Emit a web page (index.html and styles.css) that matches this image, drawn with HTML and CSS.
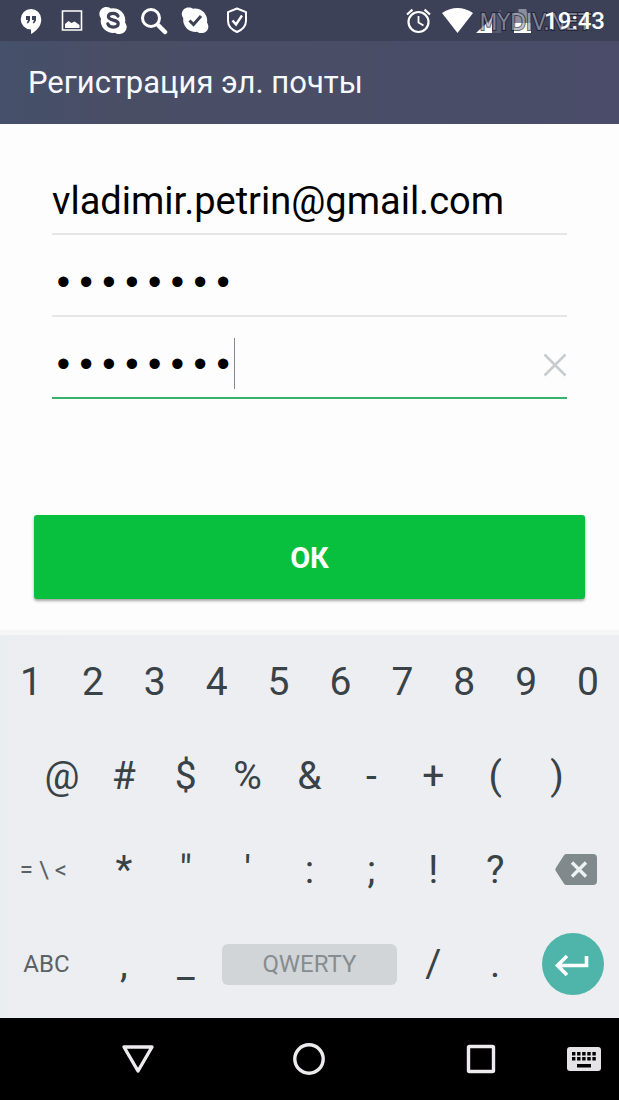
FILE: index.html
```html
<!DOCTYPE html>
<html lang="ru">
<head>
<meta charset="utf-8">
<meta name="viewport" content="width=device-width, initial-scale=1">
<title>Регистрация эл. почты</title>
<link rel="stylesheet" href="styles.css">
</head>
<body>
<div class="screen">
  <div class="status">
    <div class="status-group">
      <svg class="icon" viewBox="0 0 28 28"><path fill="#fff" d="M14 2a10.300 10.300 0 0 0 0 20.600v4.400c5-2.500 10.300-7.500 10.300-14.700A10.300 10.300 0 0 0 14 2z"/><path fill="#3d4158" d="M9 9h4v4.500l-1.800 2.700H9.700L11 13H9zM15 9h4v4.500l-1.800 2.700h-1.500L17 13h-2z"/></svg>
      <svg class="icon" viewBox="0 0 28 28"><path fill="none" stroke="#fff" stroke-width="1.600" d="M4.500 4h19v19h-19z"/><path fill="#fff" d="M7 21v-4l3.500-3 3 2 3-1.500 5 3.500v3z"/></svg>
      <svg class="icon" viewBox="0 0 28 28"><path fill="#fff" d="M7.500 0c2 0 3.500.8 4.500 1.400A12 12 0 0 1 26 15.600c1.200 1.800 2 3.400 1.600 5.500-.7 3.800-4 6.200-7.500 5.900-1.800 0-3-.6-4.200-1.300A12 12 0 0 1 2 11.400C1 10 .2 8.200.4 6.300.8 2.700 3.800 0 7.500 0z"/><path fill="none" stroke="#3d4158" stroke-width="3.200" stroke-linecap="round" d="M19 9c-1-2.200-3-2.700-5-2.700-2.600 0-4.600 1.200-4.600 3.300 0 4.800 9.800 2.300 9.800 7 0 2.300-2.200 3.500-5 3.500-2.600 0-4.600-1-5.400-3.300"/></svg>
      <svg class="icon" viewBox="0 0 28 28"><circle cx="11" cy="11" r="8.500" fill="none" stroke="#fff" stroke-width="3"/><path stroke="#fff" stroke-width="4.500" stroke-linecap="round" d="M18.500 18.500l6.500 6.500"/></svg>
      <svg class="icon" viewBox="0 0 28 28"><path fill="#fff" d="M7.500.5c2 0 3.500.6 4.500 1.200A12 12 0 0 1 26 15.600c1 1.800 1.600 3.400 1.200 5.300-.7 3.300-3.800 5.400-7.200 5.200-1.600 0-2.800-.6-4-1.300A12 12 0 0 1 2.300 11.400C1.300 10 .6 8.200.8 6.500c.4-3.400 3.200-6 6.700-6z"/><path fill="none" stroke="#3d4158" stroke-width="3" d="M8.500 13.500l4 4 7.500-8.500"/></svg>
      <svg class="icon" viewBox="0 0 28 28"><path fill="none" stroke="#fff" stroke-width="2" stroke-linejoin="round" d="M15 1.500l9 3.700v8.500c0 5.500-3.800 9-9 11.300-5.200-2.300-9-5.800-9-11.300V5.200z"/><path fill="none" stroke="#fff" stroke-width="2.400" d="M10.500 13.500l3.500 4 6-9"/></svg>
    </div>
    <div class="status-group status-right">
      <svg class="icon" viewBox="0 0 28 28"><g fill="none" stroke="#fff" stroke-width="2.200"><circle cx="15.500" cy="15" r="10"/><path stroke-width="1.800" d="M15.500 9v6.500l5 3"/><path d="M4 7.500l5.500-4.800M27 7.500l-5.500-4.800"/></g></svg>
      <svg class="icon-signal" viewBox="0 0 60 28"><path fill="#fff" d="M15.500 26L0 6Q15.500-4 31 6z"/><path fill="#fff" d="M34 26L50 11v15z"/><path fill="#777b8a" d="M50 11l9-9v24h-9z" opacity=".45"/></svg>
      <svg class="icon-battery" viewBox="0 0 20 28"><path fill="#8b8e9d" d="M1 5h4.500V2h8v3H18v13H1z"/><path fill="#fff" d="M1 16h17v10H1z"/></svg>
      <span class="watermark">MYDIV.NET</span>
      <time class="clock">19:43</time>
    </div>
  </div>

  <header class="toolbar"><h1 class="title">Регистрация эл. почты</h1></header>

  <form class="form">
    <div class="fields">
      <div class="field"><input class="input" type="email" value="vladimir.petrin@gmail.com" aria-label="Эл. почта"></div>
      <div class="field"><input class="input secret" type="password" value="12345678" aria-label="Пароль"></div>
      <div class="field active">
        <input class="input secret" type="password" value="12345678" aria-label="Повторите пароль">
        <span class="caret"></span>
        <button class="clear" type="button" aria-label="Очистить"><svg class="clear-icon" viewBox="0 0 24 24"><path stroke="#c9cccf" stroke-width="2.500" d="M1.500 1.500l21 21M22.500 1.500l-21 21"/></svg></button>
      </div>
    </div>
    <button class="submit" type="button">ОК</button>
  </form>

  <div class="keyboard">
    <div class="keys">
      <button class="key">1</button><button class="key">2</button><button class="key">3</button><button class="key">4</button><button class="key">5</button><button class="key">6</button><button class="key">7</button><button class="key">8</button><button class="key">9</button><button class="key">0</button>
    </div>
    <div class="keys">
      <button class="key first">@</button><button class="key">#</button><button class="key">$</button><button class="key">%</button><button class="key">&amp;</button><button class="key">-</button><button class="key">+</button><button class="key">(</button><button class="key">)</button>
    </div>
    <div class="keys">
      <button class="key wide symbols">= \ &lt;</button><button class="key">*</button><button class="key">"</button><button class="key">'</button><button class="key">:</button><button class="key">;</button><button class="key">!</button><button class="key">?</button>
      <button class="key wide" aria-label="Удалить"><svg class="delete-icon" viewBox="0 0 42 32"><path fill="#80898c" d="M11.500 0H38a4 4 0 0 1 4 4v23a4 4 0 0 1-4 4H11.500a3 3 0 0 1-2.500-1.300L.8 17a3 3 0 0 1 0-3L9 1.300A3 3 0 0 1 11.500 0z"/><path stroke="#eef1f3" stroke-width="3.400" d="M17 8.500l14 14M31 8.500l-14 14"/></svg></button>
    </div>
    <div class="keys">
      <button class="key wide letters">ABC</button><button class="key">,</button><button class="key">_</button>
      <button class="key space"><span class="space-label">QWERTY</span></button>
      <button class="key">/</button><button class="key">.</button>
      <button class="key wide" aria-label="Ввод"><svg class="enter-icon" viewBox="0 0 62 62"><circle cx="31" cy="31" r="31" fill="#4fb5aa"/><path fill="none" stroke="#fff" stroke-width="3.600" d="M44.500 23v9.500H15.500M25 23L15.500 32.500l9.500 9.500"/></svg></button>
    </div>
  </div>

  <nav class="nav">
    <button class="nav-button back" aria-label="Назад"><svg class="nav-icon" viewBox="0 0 34 34"><path fill="none" stroke="#eeebee" stroke-width="3.400" stroke-linejoin="round" d="M3 5h28L17 29z"/></svg></button>
    <button class="nav-button" aria-label="Домой"><svg class="nav-icon" viewBox="0 0 34 34"><circle cx="17" cy="17" r="14.200" fill="none" stroke="#eeebee" stroke-width="3.400"/></svg></button>
    <button class="nav-button" aria-label="Недавние"><svg class="nav-icon" viewBox="0 0 34 34"><rect x="4.500" y="4.500" width="25" height="25" rx="1" fill="none" stroke="#eeebee" stroke-width="3.400"/></svg></button>
    <button class="nav-button switch" aria-label="Клавиатура"><svg class="nav-icon" viewBox="0 0 34 34"><rect y="5" width="34" height="24" rx="3" fill="#e6e3e6"/><path stroke="#000" stroke-width="3.400" stroke-dasharray="3.400 1.700" d="M5 11.700h24.100M5 16.800h24.100"/><path fill="#000" d="M10 22h14v3.500H10z"/></svg></button>
  </nav>
</div>
</body>
</html>
```
FILE: styles.css
```css
* { box-sizing: border-box; }
body { margin: 0; background: #000; font-family: Roboto, "Noto Sans", sans-serif; }
button, input { margin: 0; padding: 0; border: 0; background: none; font: inherit; color: inherit; outline: 0; }
svg { display: block; }
.screen { display: flex; flex-direction: column; min-height: 100vh; background: #fdfdfe; }

.status { display: flex; justify-content: space-between; height: 41px; padding: 0 14px 0 17px; background: #3d4158; }
.status-group { display: flex; align-items: center; gap: 13px; }
.status-right { position: relative; gap: 11px; }
.icon { width: 28px; height: 28px; }
.icon-signal { width: 60px; height: 28px; }
.icon-battery { width: 20px; height: 28px; }
.clock { position: relative; font-size: 24px; font-weight: 500; line-height: 28px; color: #fff; }
.watermark { position: absolute; right: 14px; top: 8px; font-family: "DejaVu Sans Condensed", "DejaVu Sans", sans-serif; font-size: 23px; line-height: 28px; color: #a3a5b0; -webkit-text-stroke: 2px #14172f; paint-order: stroke fill; opacity: .65; }

.toolbar { display: flex; align-items: center; height: 83px; padding: 0 28px; background: linear-gradient(90deg, #45506a, #4a4e65 20%, #494d66 60%, #4a4c69); }
.title { margin: 0; font-size: 31px; line-height: 40px; font-weight: 400; color: #f6faff; }

.form { padding: 29px 34px 31px; }
.fields { padding: 0 18px; }
.field { position: relative; display: flex; align-items: center; height: 82px; padding-top: 16px; border-bottom: 2px solid #e6e6e8; }
.active { border-color: #38b36c; }
.input { flex: 1; min-width: 0; height: 50px; font-size: 38px; color: #000; }
.secret, .caret { font-family: "Liberation Mono", monospace; font-size: 38px; }
.secret { padding-top: 2px; }
.caret { position: absolute; left: 8ch; top: 21px; width: 1px; height: 51px; background: #8b8790; }
.clear, .clear-icon { width: 24px; height: 24px; }
.submit { display: block; width: 100%; height: 84px; margin-top: 116px; padding-top: 2px; border-radius: 3px; background: #09c03e; box-shadow: 0 2px 3px rgba(0, 0, 0, .35); font-size: 29px; font-weight: 700; color: #fff; }

.keyboard { padding-bottom: 7px; border-top: 5px solid #f5f6f8; background: linear-gradient(90deg, #ebeef0, #edeef2 30%); }
.keys { display: grid; grid-template-columns: repeat(20, minmax(0, 1fr)); }
.key { grid-column: span 2; display: flex; align-items: center; justify-content: center; height: 94px; font-size: 39px; color: #394246; }
.first { grid-column: 2 / span 2; }
.wide { grid-column: span 3; }
.space { grid-column: span 6; padding: 0 5px; }
.space-label { flex: 1; border-radius: 6px; background: #d1d5d8; font-size: 24px; line-height: 41px; color: #868d90; }
.symbols { padding-right: 6px; font-size: 24px; color: #5b6265; }
.letters { font-size: 24px; color: #5b6265; }
.delete-icon { width: 42px; height: 32px; margin-left: 6px; }
.enter-icon { width: 62px; height: 62px; }

.nav { display: grid; grid-template-columns: 3fr 10fr 10fr 10fr 3fr; flex: 1; min-height: 82px; background: #000; }
.nav-button { display: flex; align-items: center; justify-content: center; }
.back { grid-column: 2; }
.switch { justify-content: flex-start; }
.nav-icon { width: 34px; height: 34px; }
```
